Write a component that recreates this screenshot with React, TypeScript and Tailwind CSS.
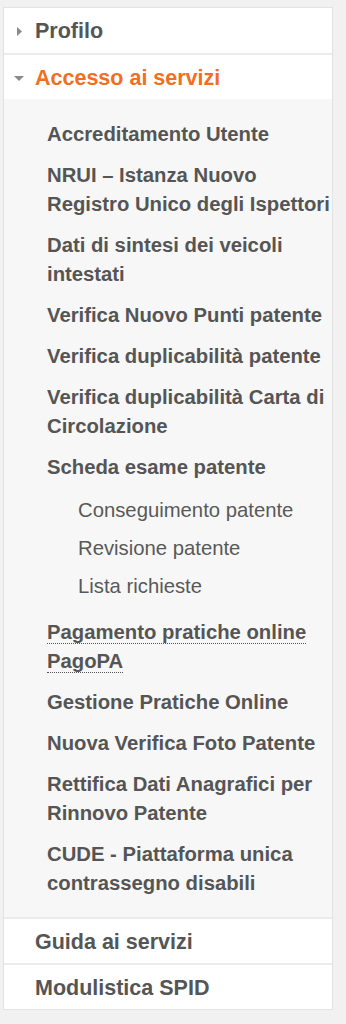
import React from "react";

type Item = { label: string; children?: string[]; dotted?: boolean };

const items: Item[] = [
  { label: "Accreditamento Utente" },
  { label: "NRUI – Istanza Nuovo Registro Unico degli Ispettori" },
  { label: "Dati di sintesi dei veicoli intestati" },
  { label: "Verifica Nuovo Punti patente" },
  { label: "Verifica duplicabilità patente" },
  { label: "Verifica duplicabilità Carta di Circolazione" },
  {
    label: "Scheda esame patente",
    children: ["Conseguimento patente", "Revisione patente", "Lista richieste"],
  },
  { label: "Pagamento pratiche online PagoPA", dotted: true },
  { label: "Gestione Pratiche Online" },
  { label: "Nuova Verifica Foto Patente" },
  { label: "Rettifica Dati Anagrafici per Rinnovo Patente" },
  { label: "CUDE - Piattaforma unica contrassegno disabili" },
];

function RightTri() {
  return (
    <svg width="5" height="9" viewBox="0 0 5 9" className="ml-[13px] block">
      <polygon points="0,0 5,4.5 0,9" fill="#8a8a8a" />
    </svg>
  );
}

function DownTri() {
  return (
    <svg width="10" height="5" viewBox="0 0 10 5" className="ml-[10px] block">
      <polygon points="0,0 10,0 5,5" fill="#8a8a8a" />
    </svg>
  );
}

export default function App() {
  return (
    <div
      className="min-h-screen bg-[#f1f1f1] pt-[7px] pl-[3px]"
      style={{ fontFamily: '"Liberation Sans", Arial, Helvetica, sans-serif' }}
    >
      <nav className="w-[330px] bg-white border border-[#e3e3e3]">
        <div className="flex items-center pt-[11px] pb-[9px] border-b-2 border-[#ebebeb]">
          <div className="w-[31px] flex items-center">
            <RightTri />
          </div>
          <span className="text-[21.5px] leading-[25px] font-bold text-[#555555]">Profilo</span>
        </div>
        <div className="flex items-center pt-[11px] pb-[8px]">
          <div className="w-[31px] flex items-center">
            <DownTri />
          </div>
          <span className="text-[21.5px] leading-[25px] font-bold text-[#f26f22]">
            Accesso ai servizi
          </span>
        </div>
        <ul className="bg-[#f7f7f7] pl-[43px] pt-[15px] pb-[13px] border-b-2 border-[#ebebeb]">
          {items.map((it) => (
            <li key={it.label} className="py-[6px]">
              <div className="text-[20.3px] leading-[29px] font-bold text-[#555555]">
                {it.dotted ? (
                  <span className="border-b border-dotted border-[#555555]">{it.label}</span>
                ) : (
                  it.label
                )}
              </div>
              {it.children && (
                <ul className="pl-[31px] pt-[9px] pb-[1px]">
                  {it.children.map((c) => (
                    <li
                      key={c}
                      className="py-[6px] text-[20.3px] leading-[26px] font-normal text-[#595959]"
                    >
                      {c}
                    </li>
                  ))}
                </ul>
              )}
            </li>
          ))}
        </ul>
        <div className="flex items-center pt-[11px] pb-[8px] pl-[31px] border-b-2 border-[#ebebeb]">
          <span className="text-[21.5px] leading-[25px] font-bold text-[#555555]">
            Guida ai servizi
          </span>
        </div>
        <div className="flex items-center pt-[11px] pb-[8px] pl-[31px]">
          <span className="text-[21.5px] leading-[25px] font-bold text-[#555555]">
            Modulistica SPID
          </span>
        </div>
      </nav>
    </div>
  );
}
